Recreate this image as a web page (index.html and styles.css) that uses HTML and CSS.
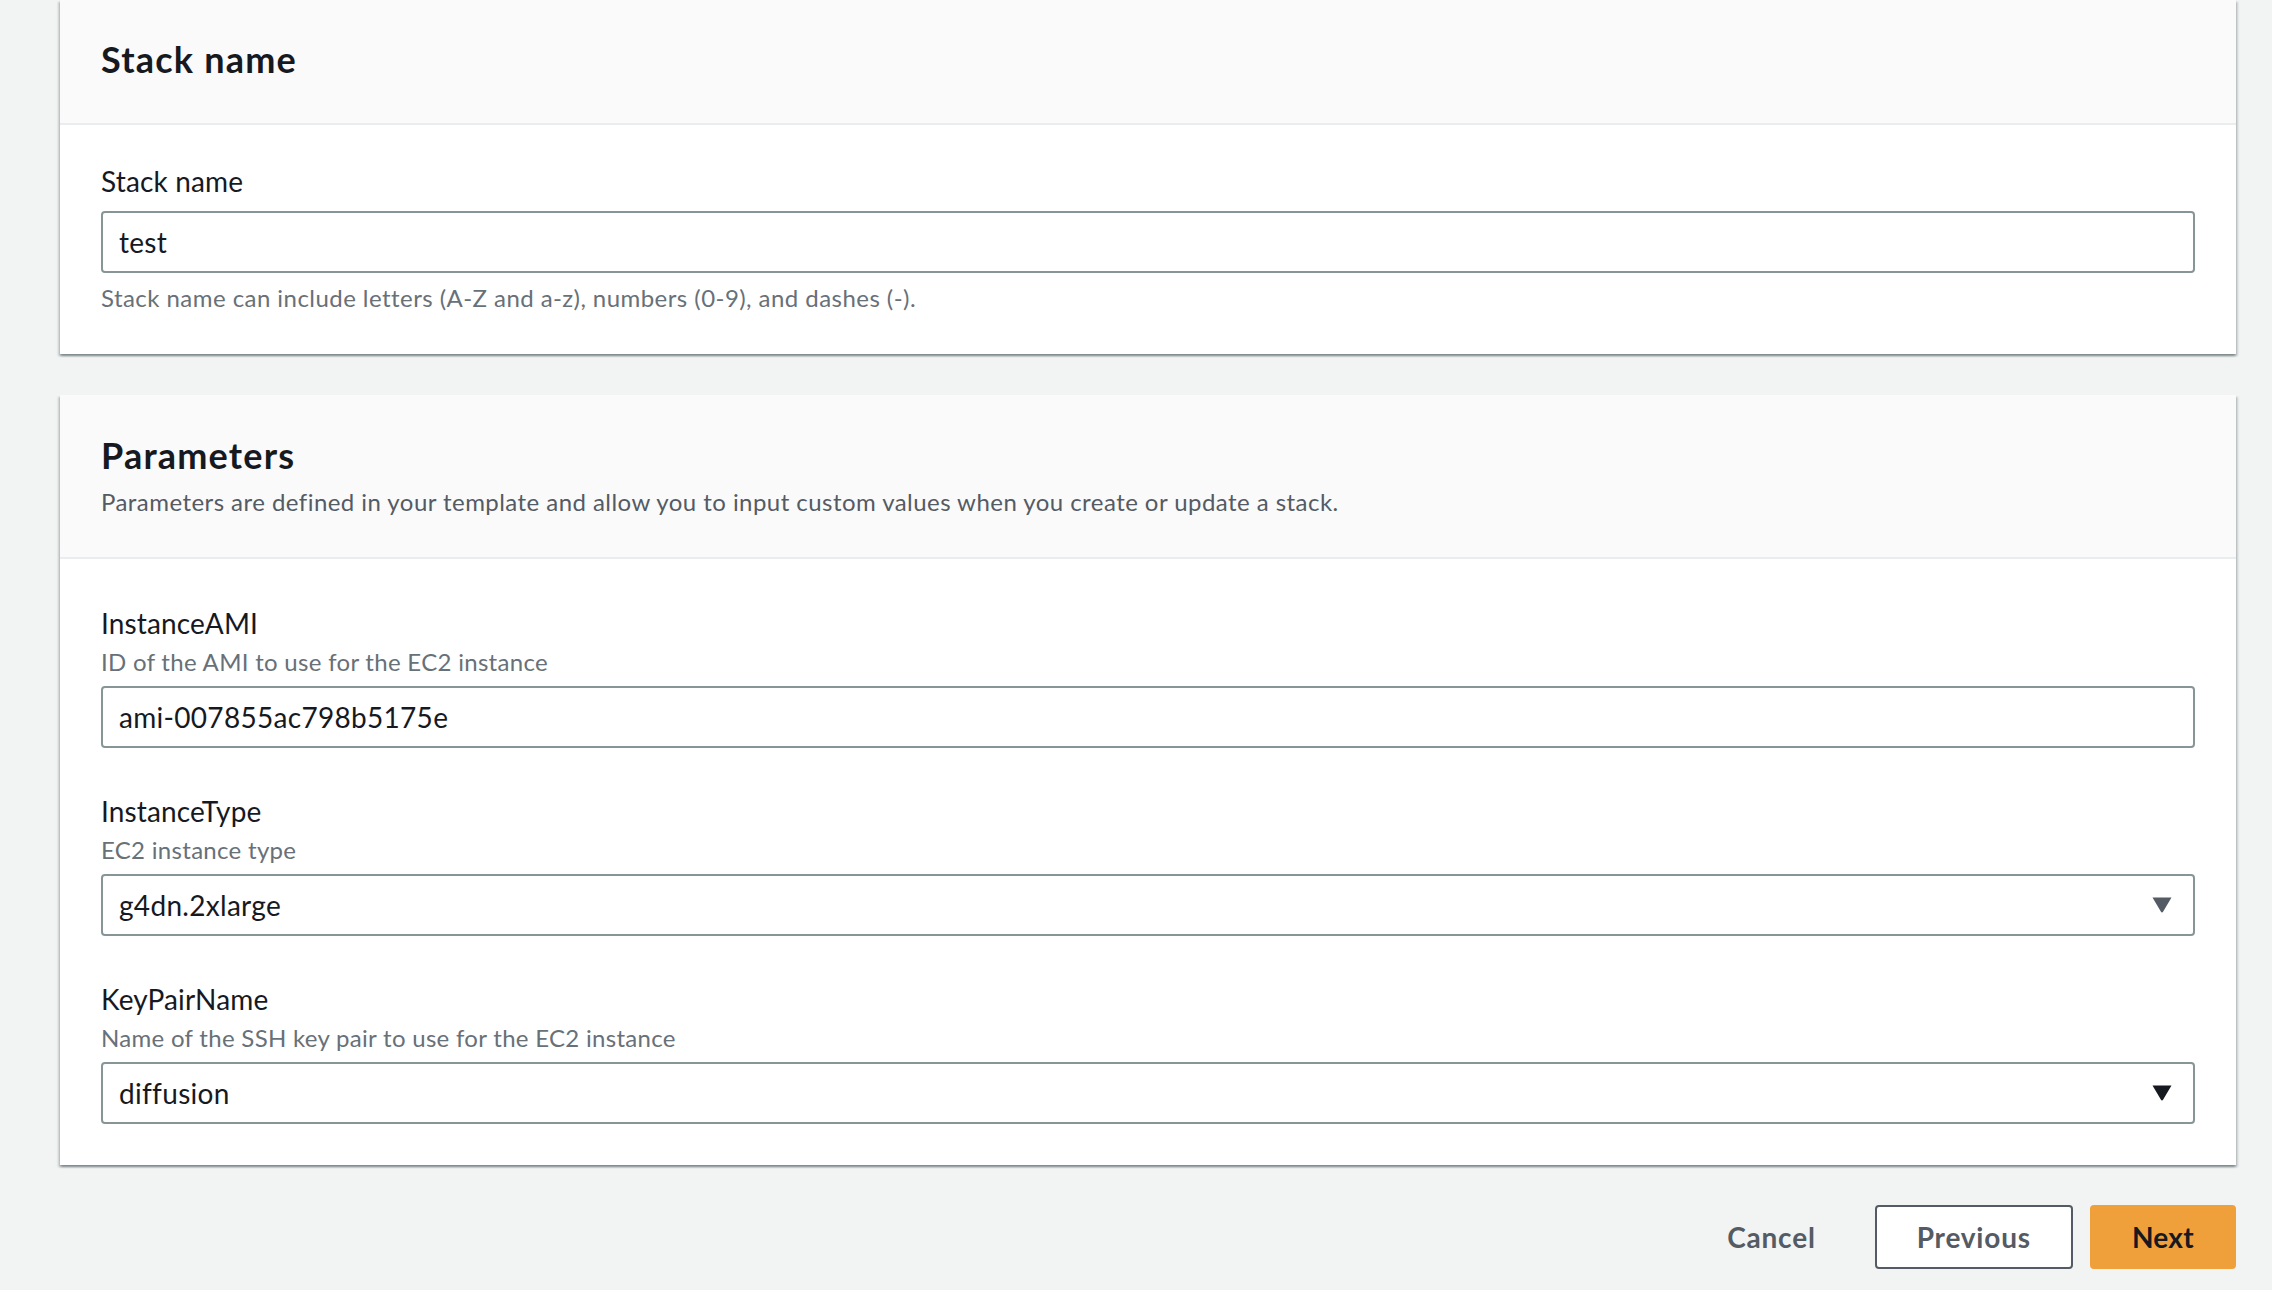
FILE: index.html
```html
<!DOCTYPE html>
<html lang="en">
<head>
<meta charset="utf-8">
<title>Specify stack details</title>
<link rel="stylesheet" href="styles.css">
</head>
<body>
<main class="page">
  <section class="card">
    <div class="card-header">
      <h2 class="card-title">Stack name</h2>
    </div>
    <div class="card-body card-body--first">
      <div class="field">
        <label class="field-label" for="stack-name">Stack name</label>
        <input class="control control--tight" id="stack-name" type="text" value="test" readonly>
        <div class="field-hint">Stack name can include letters (A-Z and a-z), numbers (0-9), and dashes (-).</div>
      </div>
    </div>
  </section>

  <section class="card">
    <div class="card-header card-header--desc">
      <h2 class="card-title">Parameters</h2>
      <p class="card-desc">Parameters are defined in your template and allow you to input custom values when you create or update a stack.</p>
    </div>
    <div class="card-body">
      <div class="field">
        <label class="field-label" for="ami">InstanceAMI</label>
        <div class="field-desc">ID of the AMI to use for the EC2 instance</div>
        <input class="control" id="ami" type="text" value="ami-007855ac798b5175e" readonly>
      </div>
      <div class="field">
        <div class="field-label">InstanceType</div>
        <div class="field-desc">EC2 instance type</div>
        <div class="control select">
          <span>g4dn.2xlarge</span>
          <svg class="caret caret--muted" viewBox="0 0 20 16" width="20" height="16" aria-hidden="true"><path d="M0.5 0.5 H19.5 L11.2 14.6 Q10 16.4 8.8 14.6 Z"/></svg>
        </div>
      </div>
      <div class="field">
        <div class="field-label">KeyPairName</div>
        <div class="field-desc">Name of the SSH key pair to use for the EC2 instance</div>
        <div class="control select">
          <span>diffusion</span>
          <svg class="caret" viewBox="0 0 20 16" width="20" height="16" aria-hidden="true"><path d="M0.5 0.5 H19.5 L11.2 14.6 Q10 16.4 8.8 14.6 Z"/></svg>
        </div>
      </div>
    </div>
  </section>

  <div class="actions">
    <button class="btn btn--link" type="button">Cancel</button>
    <button class="btn btn--normal" type="button">Previous</button>
    <button class="btn btn--primary" type="button">Next</button>
  </div>
</main>
</body>
</html>
```

FILE: styles.css
```css
* { box-sizing: border-box; }

html, body {
  margin: 0;
  background: #f2f3f3;
}

body {
  font-family: Lato, "Liberation Sans", Arial, sans-serif;
  color: #16191f;
}

.page {
  display: flex;
  flex-direction: column;
  gap: 41px;
  padding: 0 36px 22px 60px;
}

.card {
  background: #ffffff;
  box-shadow: 0 2px 2px 0 rgba(0, 28, 36, 0.3),
              2px 2px 2px 0 rgba(0, 28, 36, 0.15),
              -2px 2px 2px 0 rgba(0, 28, 36, 0.15);
}

.card-header {
  background: #fafafa;
  border-bottom: 2px solid #eaeded;
  padding: 37px 41px 42px;
}

.card-header--desc {
  padding-top: 38px;
  padding-bottom: 39px;
}

.card-title {
  margin: 0;
  font-size: 36px;
  line-height: 44px;
  font-weight: 700;
  letter-spacing: 1.2px;
  color: #16191f;
}

.card-desc {
  margin: 9px 0 0;
  font-size: 24px;
  line-height: 32px;
  letter-spacing: 0.45px;
  color: #545b64;
}

.card-body {
  display: flex;
  flex-direction: column;
  gap: 43px;
  padding: 44px 41px 41px;
}

.card-body--first {
  padding-top: 36px;
  padding-bottom: 40px;
}

.field {
  display: flex;
  flex-direction: column;
}

.field-label {
  display: block;
  font-size: 28px;
  line-height: 40px;
  letter-spacing: 0.15px;
  color: #16191f;
}

.field-desc {
  margin-top: 3px;
  font-size: 24px;
  line-height: 32px;
  letter-spacing: 0.3px;
  color: #687078;
}

.field-hint {
  margin-top: 9px;
  font-size: 24px;
  line-height: 32px;
  letter-spacing: 0.45px;
  color: #687078;
}

.control {
  display: flex;
  align-items: center;
  width: 100%;
  height: 62px;
  margin-top: 8px;
  padding: 0 16px;
  border: 2px solid #879596;
  border-radius: 4px;
  background: #ffffff;
  font-family: inherit;
  font-size: 28px;
  letter-spacing: 0.3px;
  color: #16191f;
  outline: none;
}

.control--tight {
  margin-top: 10px;
}

.select {
  justify-content: space-between;
  padding-right: 21px;
}

.caret {
  display: block;
  fill: #16191f;
}

.caret--muted {
  fill: #545b64;
}

.actions {
  display: flex;
  justify-content: flex-end;
  align-items: center;
  gap: 17px;
  margin-top: -1px;
}

.btn {
  height: 64px;
  padding: 0 40px;
  border: 2px solid transparent;
  border-radius: 4px;
  font-family: inherit;
  font-size: 28px;
  font-weight: 700;
  line-height: 36px;
  letter-spacing: 0.8px;
  background: transparent;
  color: #545b64;
  cursor: pointer;
}

.btn--normal {
  background: #ffffff;
  border-color: #545b64;
}

.btn--primary {
  background: #f0a03a;
  border-color: #f0a03a;
  color: #16191f;
  letter-spacing: 0.3px;
}
```
